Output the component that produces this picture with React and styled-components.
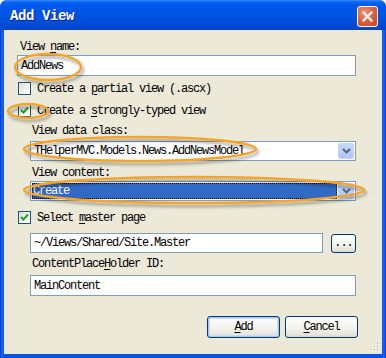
import React from "react"
import styled, { createGlobalStyle } from "styled-components"

const GlobalStyle = createGlobalStyle`
  html, body {
    margin: 0;
    padding: 0;
    background: #ffffff;
  }
  #root {
    width: 386px;
    height: 358px;
  }
`

const MONO = `"Liberation Mono", "DejaVu Sans Mono", monospace`

export default function App() {
  return (
    <>
      <GlobalStyle />
      <Window>
        <TitleBar>
          <Title>Add View</Title>
          <CloseButton>
            <svg width="11" height="11" viewBox="0 0 11 11">
              <path d="M1.5 1.5 L9.5 9.5 M9.5 1.5 L1.5 9.5" stroke="#fff" strokeWidth="2.2" strokeLinecap="square" />
            </svg>
          </CloseButton>
        </TitleBar>
        <Client>
          <Label $mt={0} $indent={3}>
            View <u>n</u>ame:
          </Label>
          <TextBox $mt={1} $left={0}>AddNews</TextBox>
          <CheckRow $mt={6}>
            <CheckBox />
            <CheckText>
              Create a <u>p</u>artial view (.ascx)
            </CheckText>
          </CheckRow>
          <CheckRow $mt={9}>
            <CheckBox $checked>
              <CheckMark />
            </CheckBox>
            <CheckText>
              Create a <u>s</u>trongly-typed view
            </CheckText>
          </CheckRow>
          <Label $mt={7} $indent={15}>View data class:</Label>
          <Select $mt={3}>
            <SelectValue>THelperMVC.Models.News.AddNewsModel</SelectValue>
            <DropButton>
              <Chevron />
            </DropButton>
          </Select>
          <Label $mt={5} $indent={15}>View content:</Label>
          <Select $mt={1}>
            <SelectValue $selected>Create</SelectValue>
            <DropButton>
              <Chevron />
            </DropButton>
          </Select>
          <CheckRow $mt={10}>
            <CheckBox $checked>
              <CheckMark />
            </CheckBox>
            <CheckText>
              Select <u>m</u>aster page
            </CheckText>
          </CheckRow>
          <BrowseRow>
            <TextBox $mt={0} $left={0} $h={20} $grow>~/Views/Shared/Site.Master</TextBox>
            <SmallButton>...</SmallButton>
          </BrowseRow>
          <Label $mt={4} $indent={15}>
            ContentPlace<u>H</u>older ID:
          </Label>
          <TextBox $mt={4} $left={13}>MainContent</TextBox>
          <ButtonRow>
            <PushButton $default>
              <u>A</u>dd
            </PushButton>
            <PushButton>
              <u>C</u>ancel
            </PushButton>
          </ButtonRow>
          <Grip>
            <svg width="10" height="10" viewBox="0 0 10 10">
              {[[8, 2], [5, 5], [8, 5], [2, 8], [5, 8], [8, 8]].map(([x, y], i) => (
                <g key={i}>
                  <rect x={x} y={y} width="1" height="1" fill="#fff" />
                  <rect x={x - 1} y={y - 1} width="1" height="1" fill="#b9b7a9" />
                </g>
              ))}
            </svg>
          </Grip>
        </Client>
        <Annotations width="386" height="358" viewBox="0 0 386 358">
          <defs>
            <filter id="sh" x="-10%" y="-40%" width="120%" height="180%">
              <feGaussianBlur in="SourceAlpha" stdDeviation="1.5" />
              <feOffset dx="2" dy="3" result="b" />
              <feComponentTransfer>
                <feFuncA type="linear" slope="0.35" />
              </feComponentTransfer>
              <feMerge>
                <feMergeNode />
                <feMergeNode in="SourceGraphic" />
              </feMerge>
            </filter>
          </defs>
          <g fill="none" stroke="#f5a32a" strokeWidth="2.4" filter="url(#sh)">
            <ellipse cx="48" cy="67" rx="33" ry="13" />
            <ellipse cx="28" cy="111" rx="20" ry="7" />
            <ellipse cx="140" cy="149" rx="116" ry="12" />
            <ellipse cx="194" cy="190" rx="170" ry="13" />
          </g>
        </Annotations>
      </Window>
    </>
  )
}

const Window = styled.div`
  position: relative;
  width: 386px;
  height: 358px;
  display: flex;
  flex-direction: column;
  background: linear-gradient(to right, #0831d9 0px, #166aee 2px, #0855dd 4px, #0855dd 382px, #166aee 384px, #0831d9 386px);
  border-radius: 7px 7px 0 0;
  overflow: hidden;
  font-family: ${MONO};
`

const TitleBar = styled.div`
  height: 30px;
  flex: 0 0 auto;
  display: flex;
  align-items: center;
  justify-content: space-between;
  padding: 0 8px 0 10px;
  box-sizing: border-box;
  background: linear-gradient(
    to bottom,
    #3d8cf7 0px,
    #0a66f2 2px,
    #0058ee 5px,
    #0055e5 12px,
    #0052dd 20px,
    #0049d0 26px,
    #0244c8 30px
  );
`

const Title = styled.span`
  color: #ffffff;
  font-family: ${MONO};
  font-size: 14px;
  font-weight: bold;
  letter-spacing: -0.4px;
  text-shadow: 1px 1px 0 #0a1e8c;
  margin-top: 2px;
`

const CloseButton = styled.div`
  width: 21px;
  height: 21px;
  box-sizing: border-box;
  border: 1px solid #ffffff;
  border-radius: 3px;
  background: radial-gradient(circle at 35% 30%, #f09478 0%, #e0633f 45%, #c8411c 100%);
  display: flex;
  align-items: center;
  justify-content: center;
  margin-top: 2px;
`

const Client = styled.div`
  position: relative;
  flex: 1 1 auto;
  margin: 0 4px 4px 4px;
  background: #ece9d8;
  padding: 10px 26px 0 13px;
  display: flex;
  flex-direction: column;
  font-family: ${MONO};
  font-size: 12px;
  letter-spacing: -1.2px;
  color: #000;
`

const Label = styled.div`
  height: 14px;
  line-height: 14px;
  margin-top: ${(p) => p.$mt}px;
  margin-left: ${(p) => p.$indent}px;
  white-space: nowrap;
  u {
    text-underline-offset: 2px;
  }
`

const TextBox = styled.div`
  display: flex;
  align-items: center;
  box-sizing: border-box;
  height: ${(p) => p.$h || 21}px;
  margin: ${(p) => p.$mt}px 0 0 ${(p) => p.$left}px;
  flex: ${(p) => (p.$grow ? "1 1 auto" : "0 0 auto")};
  border: 1px solid #7f9db9;
  background: #ffffff;
  padding: 0 3px;
  font-family: ${MONO};
  font-size: 12px;
  letter-spacing: -1.2px;
  color: #000;
  white-space: nowrap;
`

const CheckRow = styled.div`
  display: flex;
  align-items: center;
  height: 13px;
  margin-top: ${(p) => p.$mt}px;
  margin-left: 1px;
`

const CheckBox = styled.span`
  width: 13px;
  height: 13px;
  box-sizing: border-box;
  border: 1px solid #1c5180;
  background: linear-gradient(135deg, #dcdcd7 0%, #f5f4ef 60%, #ffffff 100%);
  display: flex;
  align-items: center;
  justify-content: center;
  flex: 0 0 auto;
`

const CheckText = styled.span`
  margin-left: 6px;
  white-space: nowrap;
  line-height: 14px;
  u {
    text-underline-offset: 2px;
  }
`

function CheckMark() {
  return (
    <svg width="9" height="9" viewBox="0 0 9 9">
      <path d="M1 4 L3.5 6.5 L8 1.5" fill="none" stroke="#21a121" strokeWidth="2" />
    </svg>
  )
}

const Select = styled.div`
  display: flex;
  align-items: stretch;
  height: 20px;
  box-sizing: border-box;
  margin: ${(p) => p.$mt}px 0 0 13px;
  border: 1px solid #7f9db9;
  background: #ffffff;
  padding: 1px;
  flex: 0 0 auto;
`

const SelectValue = styled.div`
  flex: 1 1 auto;
  display: flex;
  align-items: center;
  padding-left: ${(p) => (p.$selected ? 1 : 2)}px;
  margin-right: 1px;
  background: ${(p) => (p.$selected ? "#316ac5" : "transparent")};
  color: ${(p) => (p.$selected ? "#ffffff" : "#000000")};
  outline: ${(p) => (p.$selected ? "1px dotted #0b0b0b" : "none")};
  outline-offset: -1px;
  white-space: nowrap;
`

const DropButton = styled.div`
  width: 16px;
  flex: 0 0 auto;
  border-radius: 2px;
  background: linear-gradient(to bottom, #c7d8fb 0%, #bacdf8 50%, #b1c6f6 100%);
  border: 1px solid #c3d3fd;
  box-sizing: border-box;
  display: flex;
  align-items: center;
  justify-content: center;
`

function Chevron() {
  return (
    <svg width="9" height="6" viewBox="0 0 9 6">
      <path d="M1 1 L4.5 4.5 L8 1" fill="none" stroke="#4d6185" strokeWidth="1.8" />
    </svg>
  )
}

const BrowseRow = styled.div`
  display: flex;
  align-items: center;
  margin: 9px 0 0 13px;
  height: 20px;
  gap: 8px;
`

const SmallButton = styled.div`
  width: 25px;
  height: 19px;
  flex: 0 0 auto;
  box-sizing: border-box;
  border: 1px solid #003c74;
  border-radius: 3px;
  background: linear-gradient(to bottom, #ffffff 0%, #f4f3ee 60%, #dcdad0 100%);
  display: flex;
  align-items: center;
  justify-content: center;
  font-size: 12px;
  letter-spacing: -1px;
`

const ButtonRow = styled.div`
  display: flex;
  justify-content: flex-end;
  gap: 5px;
  margin-top: 20px;
  margin-right: -2px;
`

const PushButton = styled.div`
  width: 73px;
  height: 22px;
  box-sizing: border-box;
  border: 1px solid #003c74;
  border-radius: 3px;
  background: linear-gradient(to bottom, #ffffff 0%, #f5f4f0 50%, #e5e3da 90%, #d6d0c5 100%);
  box-shadow: ${(p) => (p.$default ? "inset 0 0 0 1px #a8c4f0, inset 0 0 0 2px #cddcf8" : "none")};
  display: flex;
  align-items: center;
  justify-content: center;
  u {
    text-underline-offset: 2px;
  }
`

const Grip = styled.div`
  position: absolute;
  right: 2px;
  bottom: 2px;
  width: 10px;
  height: 10px;
`

const Annotations = styled.svg`
  position: absolute;
  left: 0;
  top: 0;
  pointer-events: none;
`
